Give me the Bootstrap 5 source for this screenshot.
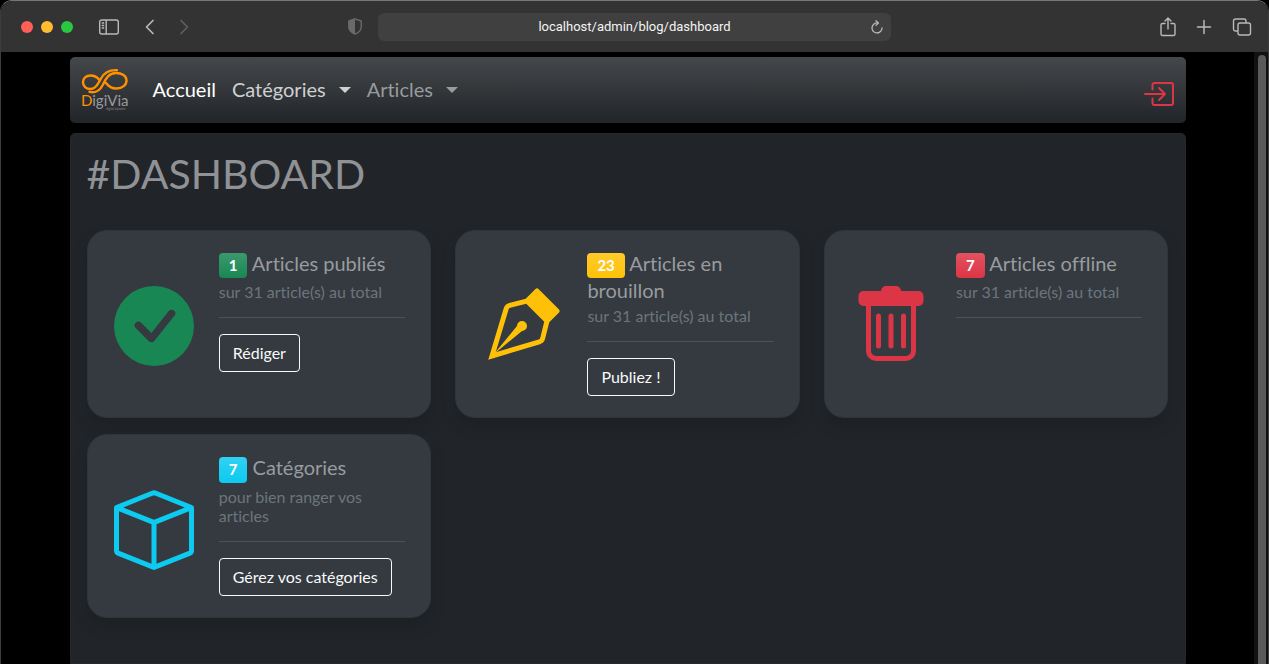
<!DOCTYPE html>
<html lang="fr">
<head>
<meta charset="utf-8">
<meta name="viewport" content="width=device-width, initial-scale=1">
<title>Dashboard - DigiVia</title>
<link href="https://cdn.jsdelivr.net/npm/bootstrap@5.3.0/dist/css/bootstrap.min.css" rel="stylesheet">
<style>
body { background: #000; color: #999b9e; font-family: Lato, "Open Sans", sans-serif; font-variant-ligatures: none; }
.window { border: 1px solid #3c3c3c; border-top: 1px solid #777; border-bottom: 0; border-radius: 12px 12px 0 0; }
.toolbar { height: 51px; background: #333; color: #b9b9b9; }
.tool { background: none; border: 0; padding: 0; color: inherit; line-height: 0; }
.tool:disabled { color: #5f5f5f; }
.dot { width: 12px; height: 12px; border-radius: 50%; border: 0; padding: 0; }
.dot-close { background: #ff5f57; }
.dot-min { background: #febc2e; }
.dot-max { background: #28c840; }
.address { width: 513px; background: #404040; border-radius: 6px; height: 28px; }
.address input { background: none; border: 0; outline: 0; color: #f4f4f4; text-align: center; font: 13px Roboto, sans-serif; min-width: 0; padding: 0 0 0 20px; }
.track { width: 14px; background: #111; padding: 3px 2px 0 4px; }
.thumb { background: #5a5a5a; border-radius: 4px 4px 0 0; }
.page { max-width: 1140px; padding-top: 5px; }
.topnav { background: linear-gradient(#45484b, #212529); border-radius: 5px; min-height: 66px; padding: 0 11px; }
.topnav .nav-link { font-size: 20px; color: #999b9e; padding: 7px 8px 9px; line-height: 30px; }
.topnav .nav-link.active { color: #fff; }
.topnav .nav-link.hovered { color: #cfd0d1; }
.topnav .dropdown-toggle::after { margin-left: 13px; vertical-align: 4px; }
.panel { background: #212529; border: 1px solid #25292d; border-radius: 5px 5px 0 0; margin-top: 10px; padding: 16px; }
.panel h1 { font-size: 41px; line-height: 48px; font-weight: 400; color: #909295; margin-bottom: 32px; }
.tile { background: #343a40; border: 1px solid #303539; border-radius: 20px; padding: 20px 25px 21px 26px; color: inherit; box-shadow: 0 8px 16px rgba(0,0,0,.15); }
.tile h2 { font-size: 20px; line-height: 24px; margin-bottom: 4px; font-weight: 400; }
.tile h3 { font-size: 16px; line-height: 19px; font-weight: 400; color: #6c757d; margin: 0; }
.tile hr { color: #999b9e; margin: 16px 0; }
.tile .btn { line-height: 24px; padding: 6px 13px; --bs-btn-border-radius: 4px; }
.tile .badge { border-radius: 4px; padding-left: 10px; padding-right: 10px; }
.symbol { width: 80px; height: 80px; margin-top: 35px; }
</style>
</head>
<body>
<div class="window vh-100 d-flex flex-column overflow-hidden">
  <header class="toolbar d-flex align-items-center flex-shrink-0">
    <div class="d-flex align-items-center flex-fill w-25 ps-3">
      <div class="d-flex gap-2 ms-1">
        <button class="dot dot-close" aria-label="Fermer"></button>
        <button class="dot dot-min" aria-label="Réduire"></button>
        <button class="dot dot-max" aria-label="Agrandir"></button>
      </div>
      <button class="tool ms-4" aria-label="Barre latérale"><svg width="24" height="16" viewBox="0 0 24 16" fill="none" stroke="currentColor" stroke-width="1.4"><rect x="2.700" y="1" width="18.600" height="14" rx="2"/><path d="M9.200 1v14M4.700 4h2.500M4.700 6.500h2.500M4.700 9h2.500"/></svg></button>
      <button class="tool ms-4" aria-label="Précédent"><svg width="10" height="16" viewBox="0 0 10 16" fill="none" stroke="currentColor" stroke-width="1.7" stroke-linecap="round" stroke-linejoin="round"><path d="M8 1.5 1.5 8 8 14.500"/></svg></button>
      <button class="tool ms-4" disabled aria-label="Suivant"><svg width="10" height="16" viewBox="0 0 10 16" fill="none" stroke="currentColor" stroke-width="1.7" stroke-linecap="round" stroke-linejoin="round"><path d="M2 1.500 8.500 8 2 14.500"/></svg></button>
      <button class="tool ms-auto me-3" aria-label="Confidentialité"><svg width="14" height="17" viewBox="0 0 14 17"><path d="M7 .8 13.200 3v6c0 3.500-2.700 5.700-6.200 7.200C3.500 14.700.8 12.500.8 9V3z" fill="none" stroke="#6a6a6a" stroke-width="1.400"/><path d="M7 .8V16.200C3.500 14.700.8 12.500.8 9V3z" fill="#6a6a6a"/></svg></button>
    </div>
    <div class="address d-flex align-items-center flex-shrink-0 pe-1">
      <input class="flex-fill" type="text" value="localhost/admin/blog/dashboard" aria-label="Adresse">
      <button class="tool me-1" aria-label="Recharger"><svg width="12" height="14" viewBox="0 0 12 14" fill="none" stroke="currentColor" stroke-width="1.300" stroke-linecap="round" stroke-linejoin="round"><path d="M6.500 3A5 5 0 1 0 11 8M5 .8 7.400 3 5 5.400"/></svg></button>
    </div>
    <div class="d-flex align-items-center justify-content-end flex-fill w-25 pe-3">
      <button class="tool me-3" aria-label="Partager"><svg width="16" height="20" viewBox="0 0 16 20" fill="none" stroke="currentColor" stroke-width="1.400" stroke-linecap="round" stroke-linejoin="round"><path d="M5 6.500H2.500A1.500 1.500 0 0 0 1 8v9a1.500 1.500 0 0 0 1.500 1.500h11A1.500 1.500 0 0 0 15 17V8a1.500 1.500 0 0 0-1.500-1.500H11M8 12V1.200M5 4l3-3 3 3"/></svg></button>
      <button class="tool ms-1 me-3" aria-label="Nouvel onglet"><svg width="16" height="16" viewBox="0 0 16 16" stroke="currentColor" stroke-width="1.500" stroke-linecap="round"><path d="M8 1.500v13M1.500 8h13"/></svg></button>
      <button class="tool ms-1" aria-label="Onglets"><svg width="20" height="20" viewBox="0 0 20 20" fill="none" stroke="currentColor" stroke-width="1.400"><rect x="6" y="6" width="12.500" height="12" rx="2"/><path d="M6 14H3.500a2 2 0 0 1-2-2V4a2 2 0 0 1 2-2H12a2 2 0 0 1 2 2v2"/></svg></button>
    </div>
  </header>
  <div class="d-flex flex-fill overflow-hidden">
    <div class="flex-fill">
      <div class="page container-fluid d-flex flex-column h-100">
        <nav class="topnav navbar navbar-expand flex-shrink-0">
          <a class="d-block" href="#" aria-label="DigiVia">
            <svg class="d-block" width="48" height="44" viewBox="0 -1 48 44"><g fill="none" stroke="#ff9100" stroke-width="2.400" stroke-linecap="round"><path d="M36 1.200C27 .5 23 4 20 9.500 17 15 14.500 20 9.500 20 5 20 2 17.200 2 13.200S5 6.500 9.500 6.500c4 0 6.500 1.500 8.500 4"/><path d="M8.500 22.800c7 1.700 10.500-1.300 13.500-7.300C25 9 28 4 35 4c6 0 10.500 3 10.500 7.500s-4 8-10 8c-4.500 0-8-2-10.500-5.500"/></g><text x="0" y="37" font-family="Lato, sans-serif" font-size="15" fill="#999"><tspan fill="#ff9100">D</tspan>igiVia</text><text x="25" y="41" font-family="Lato, sans-serif" font-size="3" fill="#888">digital dynamic</text></svg>
          </a>
          <ul class="navbar-nav ms-3 ps-0">
            <li class="nav-item"><a class="nav-link active" href="#">Accueil</a></li>
            <li class="nav-item dropdown"><a class="nav-link hovered dropdown-toggle" href="#" role="button" data-bs-toggle="dropdown">Catégories</a></li>
            <li class="nav-item dropdown"><a class="nav-link dropdown-toggle" href="#" role="button" data-bs-toggle="dropdown">Articles</a></li>
          </ul>
          <a class="text-danger ms-auto mt-2" href="#" aria-label="Déconnexion"><svg class="d-block" width="31" height="24" viewBox="0 0 31 24" fill="none" stroke="currentColor" stroke-width="2" stroke-linecap="round" stroke-linejoin="round"><path d="M8.500 7.500V3A2 2 0 0 1 10.500 1H27a2 2 0 0 1 2 2v18a2 2 0 0 1-2 2H10.500a2 2 0 0 1-2-2v-4.500M1 12h20M15 6l6 6-6 6"/></svg></a>
        </nav>
        <main class="panel flex-fill">
          <h1>#DASHBOARD</h1>
          <div class="row row-cols-3 gx-4 gy-3">
            <div class="col"><section class="tile card h-100"><div class="row">
              <div class="col-4"><svg class="symbol text-success" viewBox="0 0 16 16" fill="currentColor"><path d="M16 8A8 8 0 1 1 0 8a8 8 0 0 1 16 0zm-3.970-3.030a.75.75 0 0 0-1.080.022L7.477 9.417 5.384 7.323a.75.75 0 0 0-1.060 1.060L6.970 11.030a.75.75 0 0 0 1.079-.020l3.992-4.990a.75.75 0 0 0-.010-1.050z"/></svg></div>
              <div class="col-8">
                <h2><span class="badge bg-success bg-gradient">1</span> Articles publiés</h2>
                <h3>sur 31 article(s) au total</h3>
                <hr>
                <button class="btn btn-outline-light">Rédiger</button>
              </div>
            </div></section></div>
            <div class="col"><section class="tile card h-100"><div class="row">
              <div class="col-4"><svg class="symbol text-warning" viewBox="0 0 16 16" fill="currentColor"><path fill-rule="evenodd" d="M10.646.646a.5.5 0 0 1 .708 0l4 4a.5.5 0 0 1 0 .708l-1.902 1.902-.829 3.313a1.500 1.500 0 0 1-1.024 1.073L1.254 14.746 4.358 4.400A1.500 1.500 0 0 1 5.430 3.377l3.313-.828L10.646.646zm-1.800 2.908-3.173.793a.5.5 0 0 0-.358.342l-2.570 8.565 8.567-2.570a.5.5 0 0 0 .340-.357l.794-3.174-3.600-3.600z"/><path d="M2.832 13.228 8 9a1 1 0 1 0-1-1l-4.228 5.168-.026.086.086-.026z"/></svg></div>
              <div class="col-8">
                <h2><span class="badge bg-warning bg-gradient">23</span> Articles en brouillon</h2>
                <h3>sur 31 article(s) au total</h3>
                <hr>
                <button class="btn btn-outline-light">Publiez !</button>
              </div>
            </div></section></div>
            <div class="col"><section class="tile card h-100"><div class="row">
              <div class="col-4"><svg class="symbol text-danger" viewBox="0 0 16 16" fill="currentColor"><path d="M2.500 1H6a1 1 0 0 1 1-1h2a1 1 0 0 1 1 1h3.500a1 1 0 0 1 1 1v1a1 1 0 0 1-1 1h-11a1 1 0 0 1-1-1V2a1 1 0 0 1 1-1z"/><path d="M3.500 3.500V13A1.500 1.500 0 0 0 5 14.500h6a1.500 1.500 0 0 0 1.500-1.500V3.500M5.500 6v6M8 6v6M10.500 6v6" fill="none" stroke="currentColor" stroke-linecap="round"/></svg></div>
              <div class="col-8">
                <h2><span class="badge bg-danger bg-gradient">7</span> Articles offline</h2>
                <h3>sur 31 article(s) au total</h3>
                <hr>
              </div>
            </div></section></div>
            <div class="col"><section class="tile card h-100"><div class="row">
              <div class="col-4"><svg class="symbol text-info" viewBox="0 0 16 16" fill="currentColor"><path d="M8.186 1.113a.5.5 0 0 0-.372 0L1.846 3.500 8 5.961 14.154 3.500 8.186 1.113zM15 4.239l-6.500 2.600v7.922l6.500-2.600V4.240zM7.500 14.762V6.838L1 4.239v7.923l6.500 2.600zM7.443.184a1.500 1.500 0 0 1 1.114 0l7.129 2.852A.5.5 0 0 1 16 3.500v8.662a1 1 0 0 1-.629.928l-7.185 2.874a.5.5 0 0 1-.372 0L.630 13.090a1 1 0 0 1-.630-.928V3.500a.5.5 0 0 1 .314-.464L7.443.184z"/></svg></div>
              <div class="col-8">
                <h2><span class="badge bg-info bg-gradient">7</span> Catégories</h2>
                <h3>pour bien ranger vos articles</h3>
                <hr>
                <button class="btn btn-outline-light">Gérez vos catégories</button>
              </div>
            </div></section></div>
          </div>
        </main>
      </div>
    </div>
    <div class="track d-flex"><div class="thumb flex-fill"></div></div>
  </div>
</div>
<script src="https://cdn.jsdelivr.net/npm/bootstrap@5.3.0/dist/js/bootstrap.bundle.min.js"></script>
</body>
</html>
